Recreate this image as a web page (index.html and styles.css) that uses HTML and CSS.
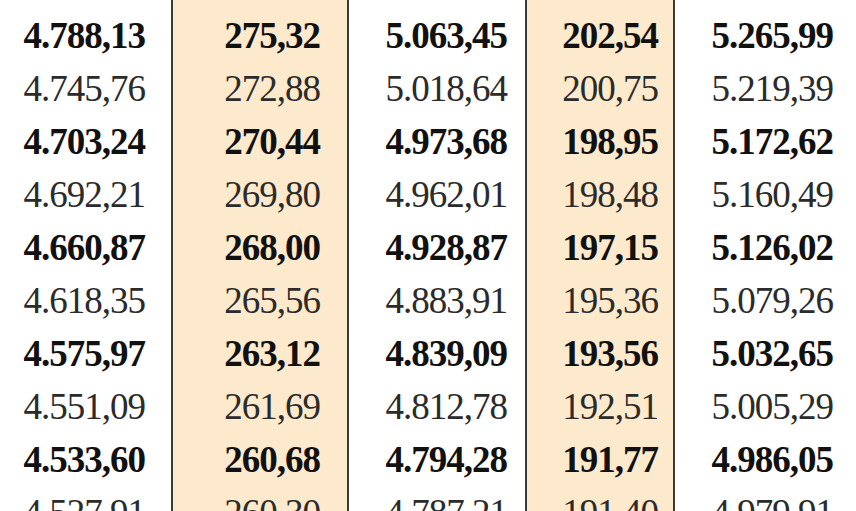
FILE: index.html
```html
<!DOCTYPE html>
<html>
<head>
<meta charset="utf-8">
<link rel="stylesheet" href="styles.css">
</head>
<body>
<table class="rates">
  <colgroup>
    <col class="c1"><col class="c2"><col class="c3"><col class="c4"><col class="c5">
  </colgroup>
  <tbody>
    <tr class="head"><td></td><td class="hl"></td><td></td><td class="hl"></td><td></td></tr>
    <tr class="b"><td>4.788,13</td><td class="hl">275,32</td><td>5.063,45</td><td class="hl">202,54</td><td>5.265,99</td></tr>
    <tr><td>4.745,76</td><td class="hl">272,88</td><td>5.018,64</td><td class="hl">200,75</td><td>5.219,39</td></tr>
    <tr class="b"><td>4.703,24</td><td class="hl">270,44</td><td>4.973,68</td><td class="hl">198,95</td><td>5.172,62</td></tr>
    <tr><td>4.692,21</td><td class="hl">269,80</td><td>4.962,01</td><td class="hl">198,48</td><td>5.160,49</td></tr>
    <tr class="b"><td>4.660,87</td><td class="hl">268,00</td><td>4.928,87</td><td class="hl">197,15</td><td>5.126,02</td></tr>
    <tr><td>4.618,35</td><td class="hl">265,56</td><td>4.883,91</td><td class="hl">195,36</td><td>5.079,26</td></tr>
    <tr class="b"><td>4.575,97</td><td class="hl">263,12</td><td>4.839,09</td><td class="hl">193,56</td><td>5.032,65</td></tr>
    <tr><td>4.551,09</td><td class="hl">261,69</td><td>4.812,78</td><td class="hl">192,51</td><td>5.005,29</td></tr>
    <tr class="b"><td>4.533,60</td><td class="hl">260,68</td><td>4.794,28</td><td class="hl">191,77</td><td>4.986,05</td></tr>
    <tr><td>4.527,91</td><td class="hl">260,30</td><td>4.787,21</td><td class="hl">191,40</td><td>4.979,91</td></tr>
  </tbody>
</table>
</body>
</html>
```

FILE: styles.css
```css
html, body {
  margin: 0;
  padding: 0;
  background: #ffffff;
  overflow: hidden;
}

.rates {
  border-collapse: collapse;
  table-layout: fixed;
  width: 856px;
  font-family: "Liberation Serif", "Times New Roman", serif;
  font-size: 37px;
  letter-spacing: -1px;
  color: #2b2b2b;
}

.c1 { width: 172px; }
.c2 { width: 176px; }
.c3 { width: 178px; }
.c4 { width: 148px; }
.c5 { width: 182px; }

.rates td {
  height: 53px;
  padding: 0;
  text-align: right;
  vertical-align: middle;
  white-space: nowrap;
  line-height: 53px;
}

.rates td:nth-child(1) { padding-right: 26px; }
.rates td:nth-child(2) { padding-right: 27px; }
.rates td:nth-child(3) { padding-right: 18px; }
.rates td:nth-child(4) { padding-right: 15px; }
.rates td:nth-child(5) { padding-right: 23px; }

.rates tr.head td {
  height: 9px;
  line-height: 9px;
}

.rates tr.b td {
  font-weight: bold;
  color: #111111;
}

.rates td.hl {
  background: #fdeacd;
  border-left: 2px solid #3a3932;
  border-right: 2px solid #3a3932;
}
```
